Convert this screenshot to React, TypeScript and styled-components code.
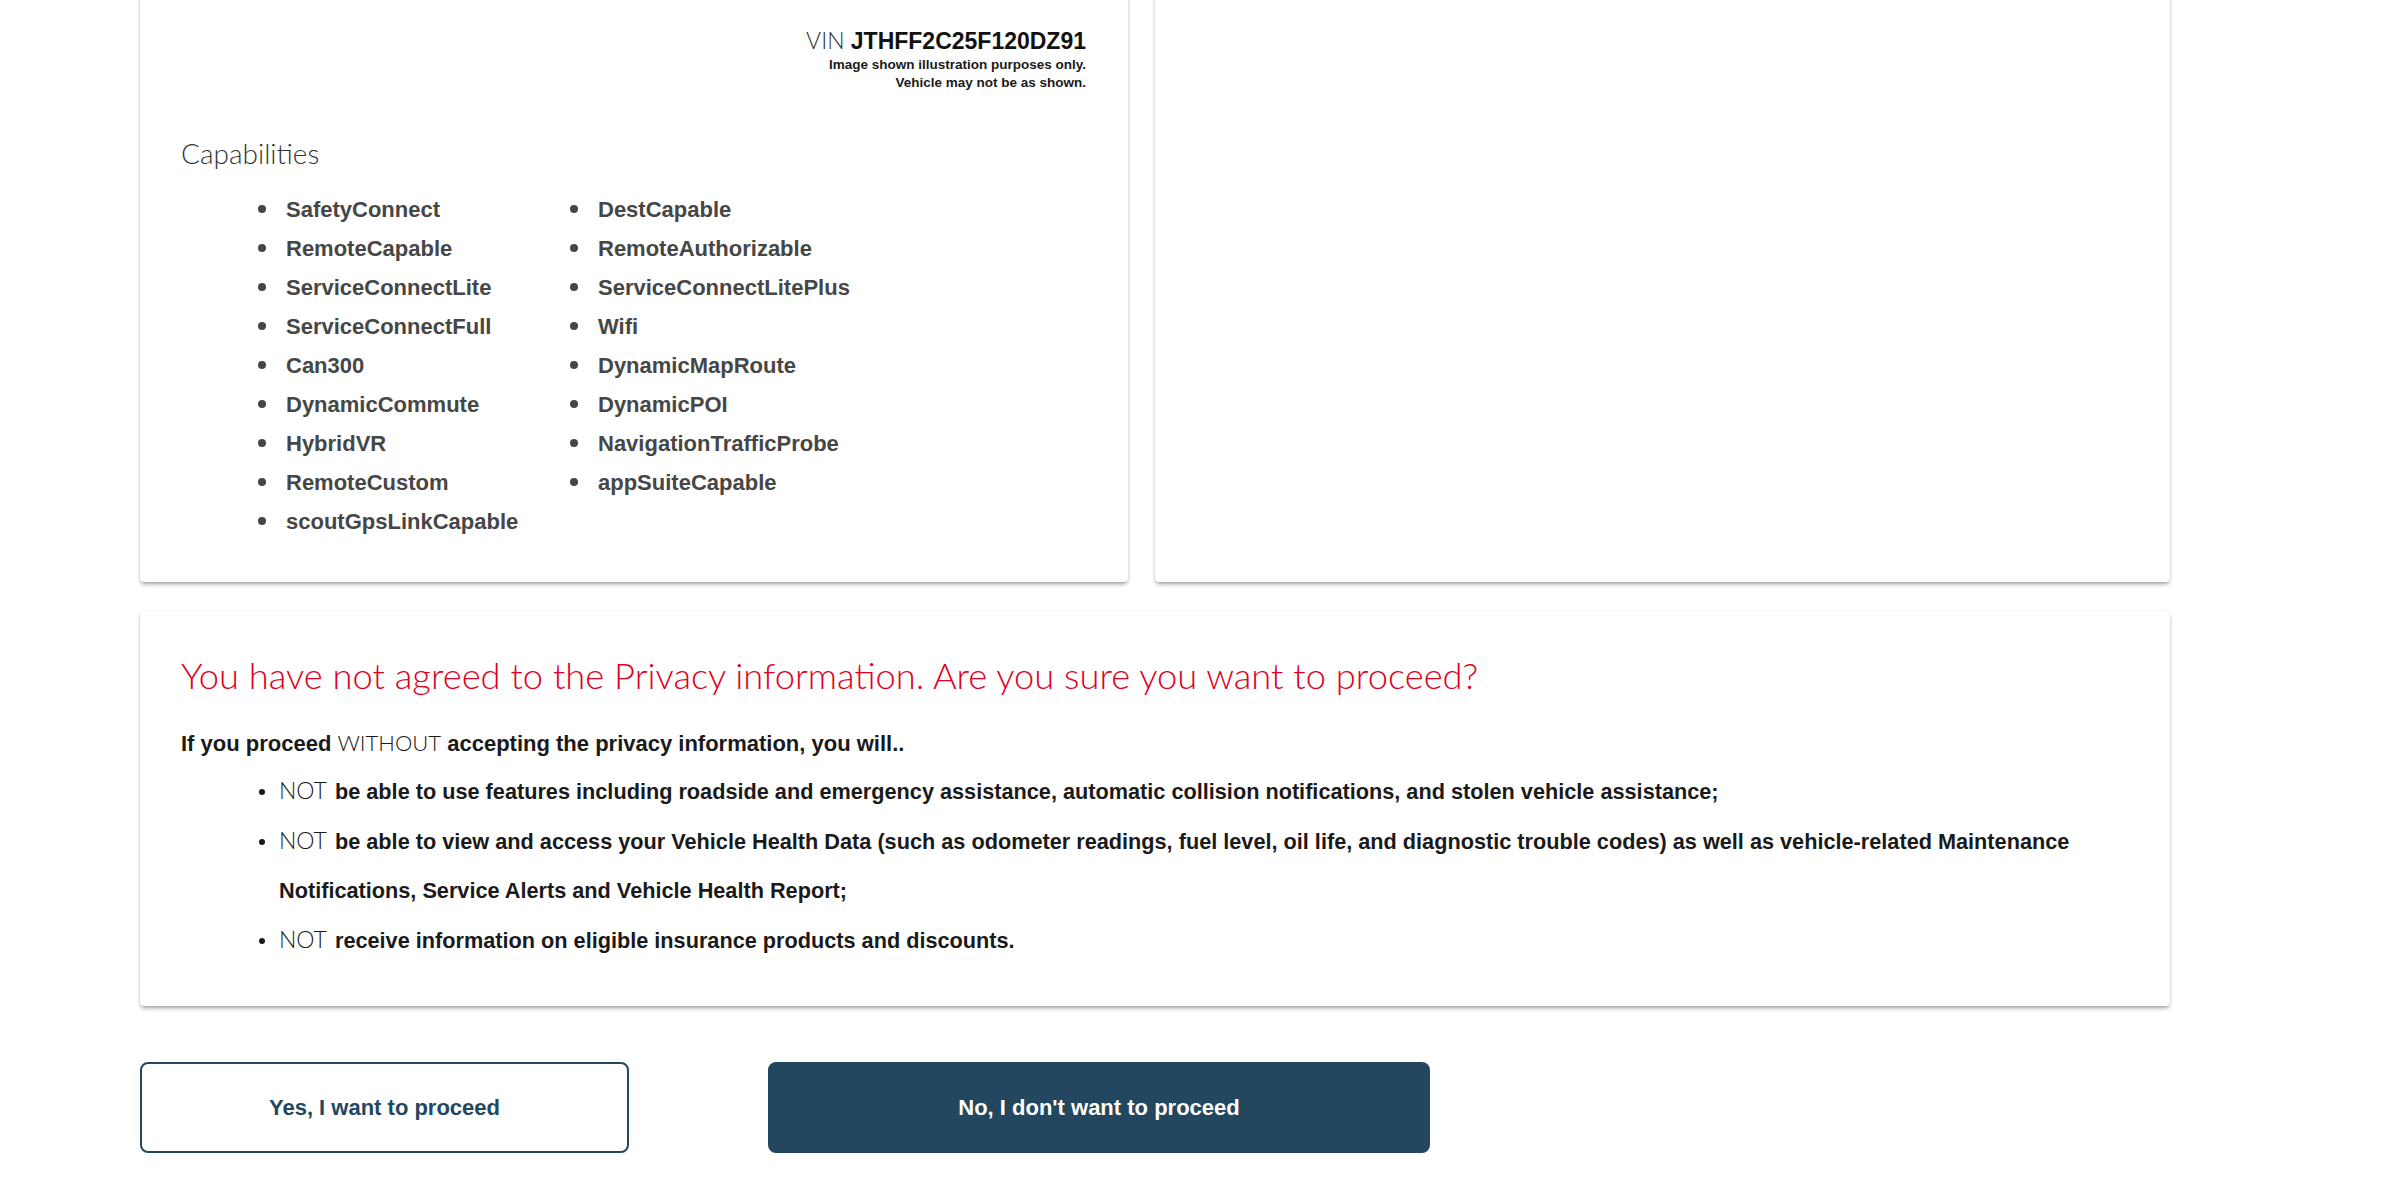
import styled, { createGlobalStyle } from "styled-components";

const GlobalStyle = createGlobalStyle`
    html, body {
        margin: 0;
        padding: 0;
        background: #ffffff;
    }
    body {
        font-family: "Liberation Sans", Arial, sans-serif;
        overflow: hidden;
    }
`

const Page = styled.div`
    box-sizing: border-box;
    width: 2396px;
    height: 1186px;
    padding: 0 226px 0 140px;
    overflow: hidden;
`
const TopRow = styled.div`
    display: grid;
    grid-template-columns: 988px 1fr;
    gap: 27px;
    margin-top: -20px;
`
const Card = styled.section`
    background: #ffffff;
    border-radius: 4px;
    box-shadow: 0 3px 4px -1px rgba(0, 0, 0, 0.38), 0 0 3px rgba(0, 0, 0, 0.08);
    box-sizing: border-box;
    padding: ${props => props.$pad || "41px"};
`
const VinBlock = styled.div`
    display: flex;
    flex-direction: column;
    align-items: flex-end;
    padding-right: 1px;
`
const Vin = styled.div`
    font-size: 23px;
    line-height: 22px;
    color: #111;
    font-weight: 700;

    span {
        font-family: Lato, "Liberation Sans", sans-serif;
        font-weight: 300;
        color: #333;
    }
`
const Disclaimer = styled.div`
    font-size: 13.5px;
    line-height: 18px;
    font-weight: 700;
    color: #1a1a1a;
    text-align: right;
    margin-top: 4px;
`
const SectionTitle = styled.h2`
    font-family: Lato, "Liberation Sans", sans-serif;
    font-weight: 300;
    font-size: 28px;
    line-height: 34px;
    color: #333;
    margin: 44px 0 20px;
`
const Columns = styled.div`
    display: grid;
    grid-template-columns: 312px 312px;
    padding-left: 105px;
`
const List = styled.ul`
    list-style: none;
    margin: 0;
    padding: 0;
`
const Item = styled.li`
    font-size: ${props => props.$size || "22px"};
    line-height: ${props => props.$lh || "39px"};
    font-weight: 700;
    color: ${props => props.$color || "#464646"};

    &::before {
        content: "";
        display: inline-block;
        width: ${props => props.$dot || "8px"};
        height: ${props => props.$dot || "8px"};
        border-radius: 50%;
        background: currentColor;
        vertical-align: 4px;
        margin-left: ${props => props.$dotLeft || "-28px"};
        margin-right: ${props => props.$dotGap || "20px"};
    }
`
const Light = styled.span`
    font-family: Lato, "Liberation Sans", sans-serif;
    font-weight: 300;
`
const NotWord = styled(Light)`
    font-size: 23px;
    margin-right: 2px;
`
const Warning = styled.h1`
    font-family: Lato, "Liberation Sans", sans-serif;
    font-weight: 300;
    font-size: 36.3px;
    line-height: 46px;
    color: #e0001d;
    margin: 0 0 25px;
`
const Lead = styled.p`
    font-size: 22px;
    line-height: 39px;
    font-weight: 700;
    color: #1a1a1a;
    margin: 0 0 3px;
`
const PrivacyList = styled.ul`
    list-style: none;
    margin: 0;
    padding: 0 0 0 98px;
`
const Actions = styled.div`
    display: flex;
    gap: 139px;
    margin-top: 56px;
`
const Button = styled.button`
    box-sizing: border-box;
    width: ${props => props.$w};
    height: 91px;
    border-radius: 8px;
    border: 2px solid #22475e;
    background: ${props => (props.$primary ? "#22475e" : "#ffffff")};
    color: ${props => (props.$primary ? "#ffffff" : "#22475e")};
    font-family: "Liberation Sans", Arial, sans-serif;
    font-size: 22px;
    font-weight: 700;
    cursor: pointer;
`

const capsLeft = [
    "SafetyConnect",
    "RemoteCapable",
    "ServiceConnectLite",
    "ServiceConnectFull",
    "Can300",
    "DynamicCommute",
    "HybridVR",
    "RemoteCustom",
    "scoutGpsLinkCapable",
]
const capsRight = [
    "DestCapable",
    "RemoteAuthorizable",
    "ServiceConnectLitePlus",
    "Wifi",
    "DynamicMapRoute",
    "DynamicPOI",
    "NavigationTrafficProbe",
    "appSuiteCapable",
]

const privacyItems = [
    "be able to use features including roadside and emergency assistance, automatic collision notifications, and stolen vehicle assistance;",
    "be able to view and access your Vehicle Health Data (such as odometer readings, fuel level, oil life, and diagnostic trouble codes) as well as vehicle-related Maintenance Notifications, Service Alerts and Vehicle Health Report;",
    "receive information on eligible insurance products and discounts.",
]

export default function App() {
    return (
        <Page>
            <GlobalStyle />
            <TopRow>
                <Card $pad="49px 41px 41px">
                    <VinBlock>
                        <Vin><span>VIN </span>JTHFF2C25F120DZ91</Vin>
                        <Disclaimer>
                            Image shown illustration purposes only.
                            <br />
                            Vehicle may not be as shown.
                        </Disclaimer>
                    </VinBlock>
                    <SectionTitle>Capabilities</SectionTitle>
                    <Columns>
                        <List>
                            {capsLeft.map(c => <Item key={c}>{c}</Item>)}
                        </List>
                        <List>
                            {capsRight.map(c => <Item key={c}>{c}</Item>)}
                        </List>
                    </Columns>
                </Card>
                <Card />
            </TopRow>

            <Card style={{ marginTop: 29 }}>
                <Warning>You have not agreed to the Privacy information. Are you sure you want to proceed?</Warning>
                <Lead>
                    If you proceed <Light>WITHOUT</Light> accepting the privacy information, you will..
                </Lead>
                <PrivacyList>
                    {privacyItems.map(t => (
                        <Item key={t} $size="21.7px" $lh="49px" $color="#1a1a1a" $dot="6px" $dotLeft="-20px" $dotGap="14px">
                            <NotWord>NOT</NotWord> {t}
                        </Item>
                    ))}
                </PrivacyList>
            </Card>

            <Actions>
                <Button $w="489px">Yes, I want to proceed</Button>
                <Button $w="662px" $primary>No, I don't want to proceed</Button>
            </Actions>
        </Page>
    )
}
